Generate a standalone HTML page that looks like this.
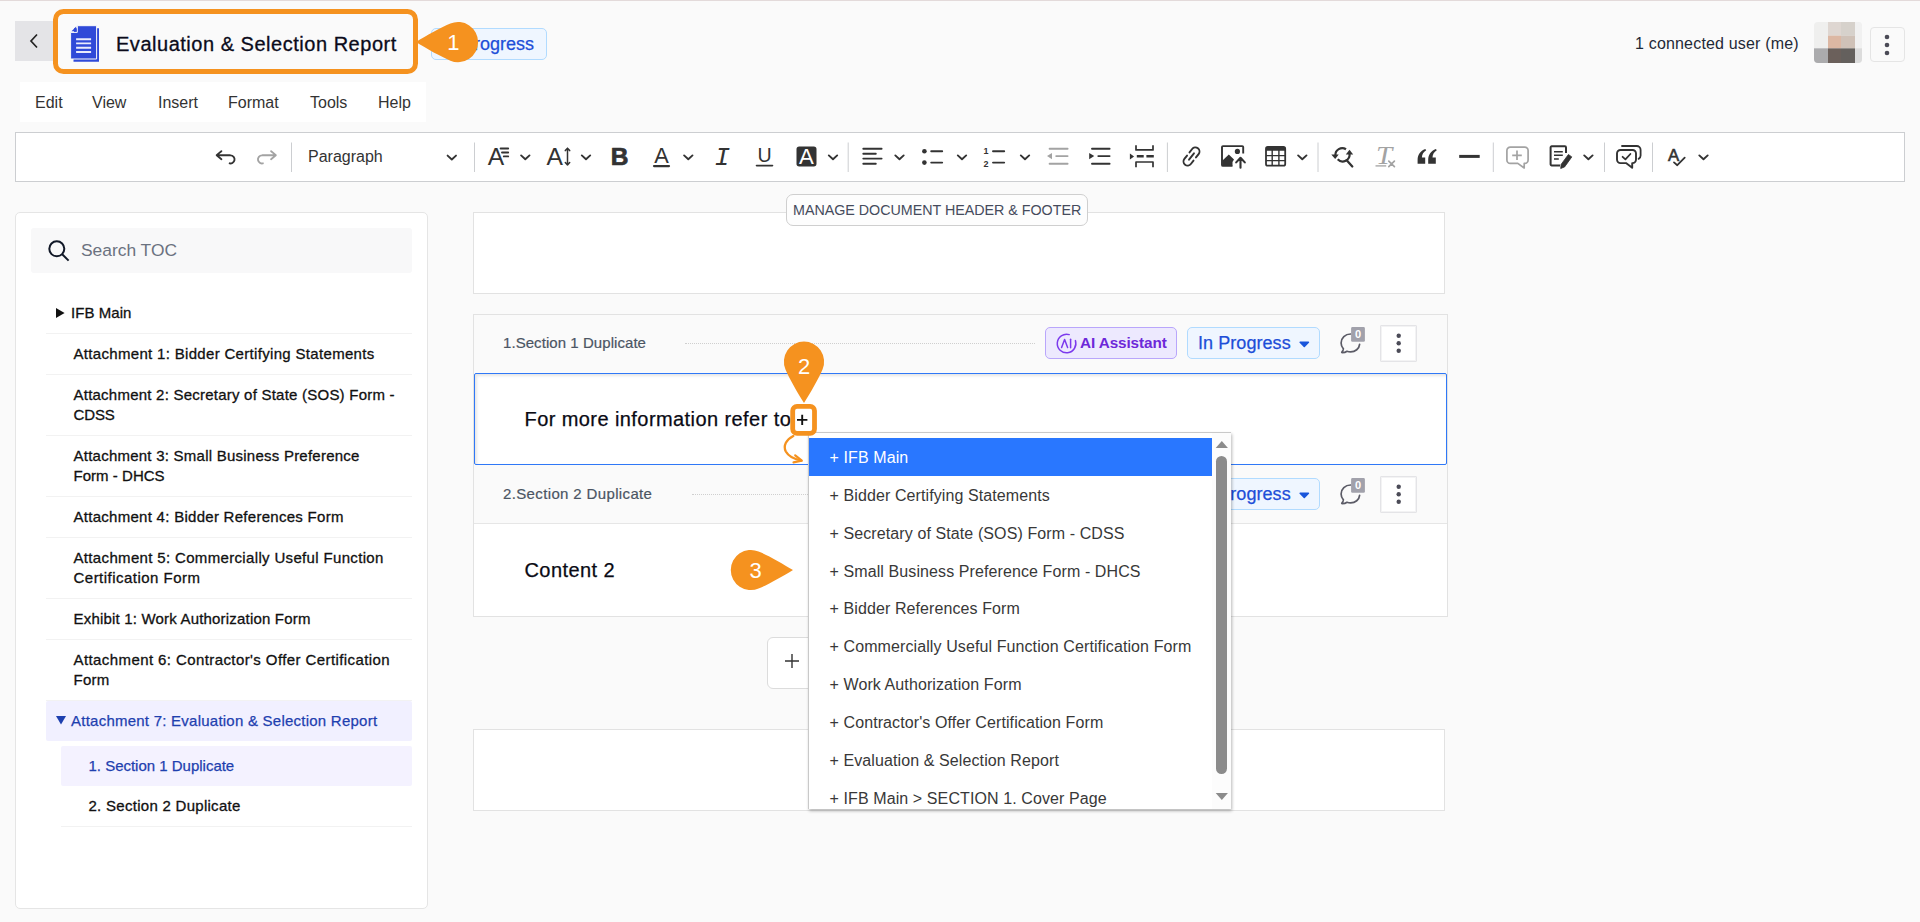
<!DOCTYPE html>
<html lang="en">
<head>
<meta charset="utf-8">
<title>Evaluation &amp; Selection Report</title>
<style>
*{box-sizing:border-box;margin:0;padding:0}
html,body{width:1920px;height:922px;overflow:hidden}
body{background:#fafafa;font-family:"Liberation Sans",Arial,sans-serif;color:#111;position:relative}
.abs{position:absolute}
.topline{left:0;top:0;width:1920px;height:1px;background:#e3dada}
/* header */
.back{left:15px;top:21px;width:40px;height:40px;background:#e4e4e7}
.hl{left:53px;top:9px;width:365px;height:65px;border:5px solid #f5921f;border-radius:10.5px;background:#fafafa}
.title{left:116px;top:31px;font-size:20px;line-height:26px;letter-spacing:.52px;color:#0b0b1a;white-space:nowrap;-webkit-text-stroke:.3px #0b0b1a}
.badge-top{left:431px;top:28px;width:116px;height:32px;border:1px solid #b1dbff;background:#eff6ff;border-radius:5px}
.badge-top span{position:absolute;left:10px;top:4px;font-size:18px;line-height:22px;color:#1d4ed8;white-space:nowrap;-webkit-text-stroke:.25px #1d4ed8}
.conn{left:1635px;top:34px;font-size:16px;line-height:20px;letter-spacing:.18px;color:#1f2937;white-space:nowrap}
.kebab-top{left:1870px;top:27px;width:35px;height:35px;border:1px solid #e5e5e5;border-radius:4px;background:#fafafa}
/* menu */
.menubar{left:20px;top:82px;width:406px;height:40px;background:#fff}
.menubar span{position:absolute;top:11px;font-size:16px;line-height:20px;color:#333;white-space:nowrap}
/* toolbar */
.toolbar{left:15px;top:132px;width:1890px;height:50px;background:#fff;border:1px solid #ccced1}
.tsep{position:absolute;top:142px;width:1px;height:30px;background:#ccced1}
.ico{position:absolute;overflow:visible}
/* toc */
.toc{left:15px;top:212px;width:413px;height:697px;background:#fff;border:1px solid #e5e5e5;border-radius:5px}
.search{left:31px;top:228px;width:381px;height:45px;background:#f8f8f9;border-radius:3px}
.search span{position:absolute;left:50px;top:11px;font-size:17.4px;line-height:22px;color:#6b7280;white-space:nowrap}
.ti{position:absolute;left:46px;width:366px;border-bottom:1px solid #f2f2f2;font-size:15px;line-height:20px;color:#111;letter-spacing:.28px;-webkit-text-stroke:.3px #111}
.ti span{position:absolute;left:27.5px;white-space:nowrap}
/* main */
.box{position:absolute;background:#fff;border:1px solid #e2e2e2}
.sechead{position:absolute;left:474px;width:973px;background:#fafafa}
.secname{position:absolute;left:503px;font-size:15px;line-height:20px;color:#4b5563;white-space:nowrap;-webkit-text-stroke:.2px #4b5563}
.dots{position:absolute;height:0;border-top:1px dotted #cfcfcf}
.ai{position:absolute;left:1045px;width:132px;height:32px;border:1px solid #b9a6fb;background:#ede9fe;border-radius:5px}
.ai span{position:absolute;left:34px;top:5px;font-size:15.3px;line-height:20px;font-weight:bold;color:#6d28d9;white-space:nowrap;letter-spacing:-.1px}
.prog{position:absolute;left:1187px;width:133px;height:32px;border:1px solid #b1dbff;background:#eff6ff;border-radius:5px}
.prog span{position:absolute;left:10px;top:4px;font-size:18px;line-height:22px;color:#1d4ed8;white-space:nowrap;letter-spacing:.06px;-webkit-text-stroke:.25px #1d4ed8}
.keb{position:absolute;left:1380px;width:37px;height:37px;border:1px solid #e4e4e7;background:#fff;border-radius:1px;box-shadow:inset 0 0 0 1px #f3f3f4}
.ptext{position:absolute;left:524.5px;font-size:20px;line-height:26px;color:#0a0a14;white-space:nowrap;letter-spacing:.42px;-webkit-text-stroke:.25px #0a0a14}
/* dropdown */
.dd{left:808px;top:432px;width:423px;height:376.5px;background:#fff;border-top:1px solid #c9c9c9;border-left:1px solid #c9c9c9;box-shadow:1px 2px 3px rgba(0,0,0,.28);overflow:hidden}
.dd .it{position:absolute;left:0;width:403px;height:38px;font-size:16px;line-height:38px;padding-left:20.5px;padding-top:1.3px;color:#383838;white-space:nowrap;letter-spacing:.1px}
.dd .it.sel{background:#2977ff;color:#fff}
</style>
</head>
<body>
<div class="abs topline"></div>

<!-- header -->
<div class="abs back"></div>
<svg class="ico" style="left:27px;top:32px" width="14" height="18" viewBox="0 0 14 18"><path d="M10 2.5 4 9l6 6.5" fill="none" stroke="#222" stroke-width="1.7"/></svg>
<div class="abs badge-top"><span>In Progress</span></div>
<div class="abs hl"></div>
<svg class="ico" style="left:70px;top:25px" width="30" height="38" viewBox="0 0 30 38">
  <path d="M4 3.3h25v33.4H3.5z" fill="#2f49d8"/>
  <path d="M7.3 .7h19.3v33.3H.6V7.4h6.7z" fill="#2f49d8" stroke="#fafafa" stroke-width="1"/>
  <path d="M1.5 6.3 6.2 1.6v4.7z" fill="#2f49d8"/>
  <path d="M6.1 14.2h15M6.1 18.4h15M6.1 22.8h15M6.1 27h15" stroke="#e9ebfc" stroke-width="1.9"/>
</svg>
<div class="abs title">Evaluation &amp; Selection Report</div>
<!-- callout 1 -->
<svg class="ico" style="left:0;top:0" width="1920" height="100" viewBox="0 0 1920 100"><path d="M415.9 42.1C426.2 48.5 441.6 57.2 450.4 60.7A20.1 20.1 0 1 0 450.4 23.5C441.6 27.0 426.2 35.7 415.9 42.1z" fill="#f5921f"/><text x="453.3" y="50" font-size="22" fill="#fff" text-anchor="middle" font-family="Liberation Sans, sans-serif">1</text></svg>
<div class="abs conn">1 connected user (me)</div>
<svg class="ico" style="left:1814px;top:22px" width="48" height="41" viewBox="0 0 48 42" preserveAspectRatio="none">
  <defs><clipPath id="av"><rect x="0" y="0" width="48" height="42" rx="4"/></clipPath></defs>
  <g clip-path="url(#av)">
  <rect width="48" height="42" fill="#efefee"/>
  <rect x="14" y="0" width="13" height="14" fill="#ded6d1"/><rect x="27" y="0" width="14" height="14" fill="#d6d1cb"/>
  <rect x="14" y="14" width="13" height="13" fill="#dcb7a3"/><rect x="27" y="14" width="14" height="13" fill="#cfc1b7"/>
  <rect x="41" y="0" width="7" height="27" fill="#f1f1f1"/>
  <rect x="0" y="27" width="14" height="15" fill="#ababad"/><rect x="14" y="27" width="13" height="15" fill="#6b605b"/><rect x="27" y="27" width="14" height="15" fill="#64605d"/><rect x="41" y="27" width="7" height="15" fill="#dcdcdc"/>
  </g>
</svg>
<div class="abs kebab-top"></div>
<svg class="ico" style="left:1884.3px;top:33.5px" width="6" height="22" viewBox="0 0 6 22"><circle cx="3" cy="3" r="2.3" fill="#4b4b57"/><circle cx="3" cy="11" r="2.3" fill="#4b4b57"/><circle cx="3" cy="19" r="2.3" fill="#4b4b57"/></svg>

<!-- menu bar -->
<div class="abs menubar">
  <span style="left:15px">Edit</span><span style="left:72px">View</span><span style="left:138px">Insert</span><span style="left:208px">Format</span><span style="left:290px">Tools</span><span style="left:358px">Help</span>
</div>

<!-- toolbar -->
<div class="abs toolbar"></div>
<svg class="ico" style="left:0;top:132px" width="1920" height="50" viewBox="0 132 1920 50">
<g transform="translate(213 144.5) scale(1.25)"><path fill="#333" d="m5.042 9.367 2.189 1.837a.75.75 0 0 1-.965 1.149l-3.788-3.18a.747.747 0 0 1-.21-.284.75.75 0 0 1 .17-.945L6.23 4.762a.75.75 0 1 1 .964 1.15L4.863 7.866h8.917A.75.75 0 0 1 14 7.9a4 4 0 1 1-1.477 7.718l.344-1.489a2.5 2.5 0 1 0 1.094-4.73l.008-.032H5.042z"/></g>
<g transform="translate(254.5 144.5) scale(1.25)"><path fill="#a3a3a3" d="m14.958 9.367-2.189 1.837a.75.75 0 0 0 .965 1.149l3.788-3.18a.747.747 0 0 0 .21-.284.75.75 0 0 0-.17-.945L13.77 4.762a.75.75 0 1 0-.964 1.15l2.331 1.955H6.22A.75.75 0 0 0 6 7.9a4 4 0 1 0 1.477 7.718l-.344-1.489A2.5 2.5 0 1 1 6.039 9.4l-.008-.032h8.927z"/></g>
<path d="M291.5 142.5v29.5" stroke="#ccced1" stroke-width="1"/>
<path d="M447.6 155.6 451.8 159.5 456.0 155.6" fill="none" stroke="#333" stroke-width="1.9" stroke-linecap="round" stroke-linejoin="round"/>
<path d="M474.5 142.5v29.5" stroke="#ccced1" stroke-width="1"/>
<text x="496" y="165" font-size="24.6" text-anchor="middle" fill="#333" font-family="Liberation Sans, sans-serif">A</text><path d="M500.6 148.5h7.6M502 152.5h6.2M503.8 156.4h4.4" stroke="#333" stroke-width="1.9" stroke-linecap="round"/>
<path d="M521.1 155.4 525.3 159.3 529.5 155.4" fill="none" stroke="#333" stroke-width="1.9" stroke-linecap="round" stroke-linejoin="round"/>
<text x="554.7" y="165" font-size="24.6" text-anchor="middle" fill="#333" font-family="Liberation Sans, sans-serif">A</text><path d="M567.5 148.3v16.6M565.3 150.6 567.5 148.2 569.7 150.6M565.3 162.6 567.5 165 569.7 162.6" fill="none" stroke="#333" stroke-width="1.5" stroke-linecap="round" stroke-linejoin="round"/>
<path d="M581.8 155.4 586.0 159.3 590.2 155.4" fill="none" stroke="#333" stroke-width="1.9" stroke-linecap="round" stroke-linejoin="round"/>
<text x="619.7" y="165.2" font-size="24.5" font-weight="bold" text-anchor="middle" fill="#333" stroke="#333" stroke-width=".7" stroke-linejoin="round" font-family="Liberation Sans, sans-serif">B</text>
<text x="661.6" y="162.8" font-size="21.8" text-anchor="middle" fill="#333" font-family="Liberation Sans, sans-serif">A</text><path d="M654 166.1h15" stroke="#333" stroke-width="2.2" stroke-linecap="round"/>
<path d="M684.1 155.4 688.3 159.3 692.5 155.4" fill="none" stroke="#333" stroke-width="1.9" stroke-linecap="round" stroke-linejoin="round"/>
<text x="722.4" y="164.9" font-size="26" font-style="italic" text-anchor="middle" fill="#333" font-family="Liberation Mono, monospace">I</text>
<text x="764.5" y="161.6" font-size="19.6" text-anchor="middle" fill="#333" font-family="Liberation Sans, sans-serif">U</text><path d="M756.5 165.6h16" stroke="#333" stroke-width="1.6" stroke-linecap="round"/>
<rect x="796.5" y="146.4" width="20" height="20" rx="2.7" fill="#333"/><text x="806.4" y="164" font-size="22.2" text-anchor="middle" fill="#fff" font-family="Liberation Sans, sans-serif">A</text>
<path d="M828.8 155.4 833.0 159.3 837.2 155.4" fill="none" stroke="#333" stroke-width="1.9" stroke-linecap="round" stroke-linejoin="round"/>
<path d="M848.2 142.5v29.5" stroke="#ccced1" stroke-width="1"/>
<path d="M863.3 148.7h18.3M863.3 153.7h12.5M863.3 158.6h18.3M863.3 163.7h12.5" stroke="#333" stroke-width="1.9" stroke-linecap="round"/>
<path d="M895.3 155.4 899.5 159.3 903.7 155.4" fill="none" stroke="#333" stroke-width="1.9" stroke-linecap="round" stroke-linejoin="round"/>
<circle cx="924.4" cy="151.2" r="2.3" fill="#333"/><circle cx="924.4" cy="162.6" r="2.3" fill="#333"/><path d="M931.2 151.2h11M931.2 162.6h11" stroke="#333" stroke-width="1.9" stroke-linecap="round"/>
<path d="M957.8 155.4 962.0 159.3 966.2 155.4" fill="none" stroke="#333" stroke-width="1.9" stroke-linecap="round" stroke-linejoin="round"/>
<text x="985.9" y="153.9" font-size="9" font-weight="bold" text-anchor="middle" fill="#333" font-family="Liberation Sans, sans-serif">1</text><text x="985.9" y="166.5" font-size="9" font-weight="bold" text-anchor="middle" fill="#333" font-family="Liberation Sans, sans-serif">2</text><path d="M993 151.2h11.2M993 162.6h11.2" stroke="#333" stroke-width="1.9" stroke-linecap="round"/>
<path d="M1020.8 155.4 1025.0 159.3 1029.2 155.4" fill="none" stroke="#333" stroke-width="1.9" stroke-linecap="round" stroke-linejoin="round"/>
<path d="M1049.6 148.7h18M1056.2 156.1h11.4M1049.6 163.7h18" stroke="#a3a3a3" stroke-width="1.9" stroke-linecap="round"/><path d="M1052 152.9v6.4l-5-3.2z" fill="#a3a3a3"/>
<path d="M1092 148.7h17.6M1098.3 156.1h11.3M1092 163.7h17.6" stroke="#333" stroke-width="1.9" stroke-linecap="round"/><path d="M1089.2 152.9v6.4l5-3.2z" fill="#333"/>
<path d="M1136 145.2v4.7h17v-4.7M1136 167.2v-5.2h17v5.2" fill="none" stroke="#333" stroke-width="1.7" stroke-linejoin="round"/><path d="M1136.8 156.3h6.9M1146.4 156.3h7.4" stroke="#333" stroke-width="2.4"/><path d="M1129.9 153.6v6l4.2-3z" fill="#333"/>
<path d="M1167.4 142.5v29.5" stroke="#ccced1" stroke-width="1"/>
<g fill="none" stroke="#333" stroke-width="1.9" stroke-linecap="round" transform="rotate(-52 1191.5 156.5)"><path d="M1189.5 152.4h-4.3a4.1 4.1 0 0 0 0 8.2h4.3"/><path d="M1193.5 152.4h4.3a4.1 4.1 0 0 1 0 8.2h-4.3"/><path d="M1187.5 156.5h8"/></g>
<path d="M1243.2 153.5v-6.4a1 1 0 0 0-1-1h-19.2a1 1 0 0 0-1 1v17.8a1 1 0 0 0 1 1h9.5" fill="none" stroke="#333" stroke-width="1.9"/><path d="M1222.5 165.4v-5l6.3-5.8 5.2 5 -1.5 2.5v3.3z" fill="#333"/><circle cx="1237.4" cy="151.4" r="2.6" fill="#333"/><path d="M1240.5 167.7v-9.5M1236.2 162.4l4.3-4.6 4.3 4.6" fill="none" stroke="#333" stroke-width="2.1" stroke-linecap="round" stroke-linejoin="round"/>
<rect x="1266" y="147" width="19.2" height="18.7" rx="1.8" fill="none" stroke="#333" stroke-width="1.8"/><path d="M1266 150.8v-2a1.8 1.8 0 0 1 1.8-1.8h15.6a1.8 1.8 0 0 1 1.8 1.8v2z" fill="#333"/><path d="M1266 155.6h19.2M1266 160.6h19.2M1272.2 150v15.7M1278.9 150v15.7" stroke="#333" stroke-width="1.4"/>
<path d="M1298.1 155.4 1302.3 159.3 1306.5 155.4" fill="none" stroke="#333" stroke-width="1.9" stroke-linecap="round" stroke-linejoin="round"/>
<path d="M1318 142.5v29.5" stroke="#ccced1" stroke-width="1"/>
<path d="M1335.4 155.5a6.9 6.9 0 0 1 10.6-6.3" fill="none" stroke="#333" stroke-width="2.2"/><path d="M1349.5 153.5a6.9 6.9 0 0 1-11.8 5.8" fill="none" stroke="#333" stroke-width="2.2"/><path d="M1331.3 154.4h7.4l-3.5 4.6z" fill="#333"/><path d="M1345.8 154.6h7.4l-3.7-4.9z" fill="#333"/><path d="M1346.7 160.2l5.6 6.3" stroke="#333" stroke-width="2.3" stroke-linecap="round"/>
<text transform="translate(1376 164.3) scale(1.16 1)" x="0" y="0" font-size="25" font-style="italic" fill="#a3a3a3" font-family="Liberation Serif, serif">T</text><path d="M1375.5 165.9h10.7" stroke="#a3a3a3" stroke-width="1.3"/><path d="M1388.8 161.2l5.6 5.4M1394.4 161.2l-5.6 5.4" stroke="#a3a3a3" stroke-width="1.7" stroke-linecap="round"/>
<path d="M1417.6 163.750h7.6v-6.150h-3.3c.2-3.3 1.5-5.6 4.3-7.3l-.9-1.2c-5 2-7.7 5.8-7.7 10.7z" fill="#333"/><path d="M1428.2 163.750h7.6v-6.150h-3.3c.2-3.3 1.5-5.6 4.3-7.3l-.9-1.2c-5 2-7.7 5.8-7.7 10.7z" fill="#333"/>
<path d="M1459.2 156.4h20.5" stroke="#333" stroke-width="3"/>
<path d="M1493.3 142.5v29.5" stroke="#ccced1" stroke-width="1"/>
<path d="M1510.3 147.2h14.4a3.4 3.4 0 0 1 3.4 3.4v9.4a3.4 3.4 0 0 1-3.4 3.4h-.5v4.6l-6.4-4.6h-7.5a3.4 3.4 0 0 1-3.4-3.4v-9.4a3.4 3.4 0 0 1 3.4-3.4z" fill="none" stroke="#a3a3a3" stroke-width="1.7" stroke-linejoin="round"/><path d="M1517 150.5v9.6M1512.2 155.3h9.6" stroke="#a3a3a3" stroke-width="1.7"/>
<path d="M1566 153v-5.6a1.1 1.1 0 0 0-1.1-1.1h-13.2a1.1 1.1 0 0 0-1.1 1.1v16.9a1.1 1.1 0 0 0 1.1 1.1h8.3" fill="none" stroke="#333" stroke-width="2"/><path d="M1554 151.7h8.8M1554 155.3h8.8M1554 159h4.8" stroke="#333" stroke-width="1.5"/><path d="M1568.4 154.5l3.4 2.4-7.2 10-3.9 1.6.4-4.1z" fill="#333" stroke="#333" stroke-width=".8" stroke-linejoin="round"/>
<path d="M1584.2 155.4 1588.4 159.3 1592.6 155.4" fill="none" stroke="#333" stroke-width="1.9" stroke-linecap="round" stroke-linejoin="round"/>
<path d="M1604.5 142.5v29.5" stroke="#ccced1" stroke-width="1"/>
<path d="M1622 146h14.7a3.9 3.9 0 0 1 3.9 3.9v5.6a3.9 3.9 0 0 1-2 3.4" fill="none" stroke="#333" stroke-width="1.8" stroke-linecap="round"/><path d="M1620.5 150h12a3.5 3.5 0 0 1 3.5 3.5v6.1a3.5 3.5 0 0 1-3.5 3.5h-.3v4.7l-6.2-4.7h-5.5a3.5 3.5 0 0 1-3.5-3.5v-6.1a3.5 3.5 0 0 1 3.5-3.5z" fill="#fff" stroke="#333" stroke-width="1.9" stroke-linejoin="round"/><path d="M1622.6 156.8l2.8 2.5 5-5.3" fill="none" stroke="#333" stroke-width="1.8" stroke-linecap="round" stroke-linejoin="round"/>
<path d="M1652.5 142.5v29.5" stroke="#ccced1" stroke-width="1"/>
<text x="1673.5" y="160.7" font-size="16.8" text-anchor="middle" fill="#333" stroke="#333" stroke-width=".6" font-family="Liberation Sans, sans-serif">A</text><path d="M1674 162.4l3.3 2.8 7.4-7.5" fill="none" stroke="#333" stroke-width="1.8" stroke-linecap="round" stroke-linejoin="round"/>
<path d="M1699.3 155.4 1703.5 159.3 1707.7 155.4" fill="none" stroke="#333" stroke-width="1.9" stroke-linecap="round" stroke-linejoin="round"/>
</svg>
<div class="abs" style="left:308px;top:147px;font-size:16px;line-height:20px;color:#333;white-space:nowrap">Paragraph</div>

<!-- toc -->
<div class="abs toc"></div>
<div class="abs search">
  <svg class="ico" style="left:17px;top:12px" width="22" height="22" viewBox="0 0 22 22"><circle cx="8.8" cy="8.8" r="7.5" fill="none" stroke="#111827" stroke-width="2"/><path d="M14.2 14.2 20.6 20.6" stroke="#111827" stroke-width="2"/></svg>
  <span>Search TOC</span>
</div>
<div class="ti" style="top:293px;height:41px"><svg class="ico" style="left:10px;top:15px" width="9" height="10" viewBox="0 0 9 10"><path d="M0 0 8.6 5 0 10z" fill="#111"/></svg><span style="left:25px;top:10px;letter-spacing:.05px">IFB Main</span></div>
<div class="ti" style="top:334px;height:41px"><span style="top:10px"><i style="font-style:normal;letter-spacing:0.32px">Attachment 1: Bidder Certifying Statements</i></span></div>
<div class="ti" style="top:375px;height:61px"><span style="top:10px"><i style="font-style:normal;letter-spacing:0.23px">Attachment 2: Secretary of State (SOS) Form -</i><br><i style="font-style:normal;letter-spacing:-0.11px">CDSS</i></span></div>
<div class="ti" style="top:436px;height:61px"><span style="top:10px"><i style="font-style:normal;letter-spacing:0.24px">Attachment 3: Small Business Preference</i><br><i style="font-style:normal;letter-spacing:0.03px">Form - DHCS</i></span></div>
<div class="ti" style="top:497px;height:41px"><span style="top:10px">Attachment 4: Bidder References Form</span></div>
<div class="ti" style="top:538px;height:61px"><span style="top:10px"><i style="font-style:normal;letter-spacing:0.34px">Attachment 5: Commercially Useful Function</i><br><i style="font-style:normal;letter-spacing:0.48px">Certification Form</i></span></div>
<div class="ti" style="top:599px;height:41px"><span style="top:10px"><i style="font-style:normal;letter-spacing:0.19px">Exhibit 1: Work Authorization Form</i></span></div>
<div class="ti" style="top:640px;height:61px"><span style="top:10px"><i style="font-style:normal;letter-spacing:0.41px">Attachment 6: Contractor's Offer Certification</i><br>Form</span></div>
<div class="ti" style="top:701px;height:40px;background:#f1f0ff;border-bottom:none;border-radius:2px;color:#1e40af;-webkit-text-stroke:.25px #1e40af"><svg class="ico" style="left:10px;top:15px" width="10" height="9" viewBox="0 0 10 9"><path d="M0 0h10L5 8.6z" fill="#1e40af"/></svg><span style="left:25px;top:10px"><i style="font-style:normal;letter-spacing:0.24px">Attachment 7: Evaluation &amp; Selection Report</i></span></div>
<div class="ti" style="left:61px;width:351px;top:746px;height:40px;background:#f4f2ff;border-bottom:none;border-radius:2px;color:#1e40af;-webkit-text-stroke:.25px #1e40af"><span style="top:10px"><i style="font-style:normal;letter-spacing:-0.01px">1. Section 1 Duplicate</i></span></div>
<div class="ti" style="left:61px;width:351px;top:786px;height:41px"><span style="top:10px">2. Section 2 Duplicate</span></div>


<!-- main -->
<div class="box" style="left:473px;top:212px;width:972px;height:82px"></div>
<div class="abs" style="left:786px;top:194px;width:302px;height:32px;border:1px solid #cfcfcf;border-radius:7px;background:#fdfdfd"><span style="position:absolute;left:6px;top:5px;font-size:14.3px;line-height:20px;color:#454b5c;white-space:nowrap;letter-spacing:-.02px">MANAGE DOCUMENT HEADER &amp; FOOTER</span></div>

<div class="box" style="left:473px;top:314px;width:975px;height:303px"></div>
<div class="sechead" style="top:315px;height:58px"></div>
<div class="secname" style="top:333px;letter-spacing:.06px">1.Section 1 Duplicate</div>
<div class="dots" style="left:685px;top:343px;width:350px"></div>
<div class="ai" style="top:327px"><svg class="ico" style="left:9.5px;top:4.6px" width="21" height="21" viewBox="0 0 21 21"><path d="M13.2 1.6A9.3 9.3 0 1 0 19.4 7.6" fill="none" stroke="#7c3aed" stroke-width="1.5" stroke-linecap="round"/><path d="M5.6 14.6 8.6 6.4l3 8.2" fill="none" stroke="#7c3aed" stroke-width="1.5" stroke-linejoin="round" stroke-linecap="round"/><path d="M14.6 6.2v8.6" stroke="#7c3aed" stroke-width="1.5" stroke-linecap="round"/></svg><span>AI Assistant</span></div>
<div class="prog" style="top:327px"><span>In Progress</span><svg class="ico" style="left:110.7px;top:13.2px" width="11" height="7" viewBox="0 0 11 7"><path d="M1.2 1.2h8.2L5.3 5.4z" fill="#1a56db" stroke="#1a56db" stroke-width="1.6" stroke-linejoin="round"/></svg></div>
<svg class="ico" style="left:1339px;top:327px" width="27" height="28" viewBox="0 0 27 28"><path d="M11.6 7C6.2 7 2.1 11 2.1 16c0 2.3.9 4.3 2.3 5.8-.1 1.3-.6 2.4-1.5 3.2-.3.3-.1.7.3.7 1.9 0 3.6-.5 4.8-1.4 1.1.4 2.3.6 3.6.6 4.7 0 8.6-3.2 9-7.6" fill="none" stroke="#5b5b66" stroke-width="1.7" stroke-linecap="round" stroke-linejoin="round"/><rect x="12.1" y=".1" width="13.8" height="14.6" rx="1.3" fill="#a1a1ab"/><text x="19" y="11" font-size="11" font-weight="bold" fill="#fff" text-anchor="middle" font-family="Liberation Sans, sans-serif">0</text></svg>
<div class="keb" style="top:325px"><svg class="ico" style="left:14.5px;top:6.5px" width="6" height="21" viewBox="0 0 6 21"><circle cx="2.7" cy="2.7" r="2.2" fill="#4b4b57"/><circle cx="2.7" cy="10.3" r="2.2" fill="#4b4b57"/><circle cx="2.7" cy="17.8" r="2.2" fill="#4b4b57"/></svg></div>
<div class="abs" style="left:474px;top:373px;width:973px;height:92px;border:1px solid #2f78f7;background:#fff;border-radius:2px;box-shadow:inset 2px 2px 3px rgba(0,0,0,.1)"></div>
<div class="ptext" style="top:406px">For more information refer to</div>
<div class="sechead" style="top:465px;height:59px;border-bottom:1px solid #e6e6e6"></div>
<div class="secname" style="top:484px;letter-spacing:.36px">2.Section 2 Duplicate</div>
<div class="dots" style="left:692px;top:494px;width:350px"></div>
<div class="ai" style="top:478px"><svg class="ico" style="left:9.5px;top:4.6px" width="21" height="21" viewBox="0 0 21 21"><path d="M13.2 1.6A9.3 9.3 0 1 0 19.4 7.6" fill="none" stroke="#7c3aed" stroke-width="1.5" stroke-linecap="round"/><path d="M5.6 14.6 8.6 6.4l3 8.2" fill="none" stroke="#7c3aed" stroke-width="1.5" stroke-linejoin="round" stroke-linecap="round"/><path d="M14.6 6.2v8.6" stroke="#7c3aed" stroke-width="1.5" stroke-linecap="round"/></svg><span>AI Assistant</span></div>
<div class="prog" style="top:478px"><span>In Progress</span><svg class="ico" style="left:110.7px;top:13.2px" width="11" height="7" viewBox="0 0 11 7"><path d="M1.2 1.2h8.2L5.3 5.4z" fill="#1a56db" stroke="#1a56db" stroke-width="1.6" stroke-linejoin="round"/></svg></div>
<svg class="ico" style="left:1339px;top:478px" width="27" height="28" viewBox="0 0 27 28"><path d="M11.6 7C6.2 7 2.1 11 2.1 16c0 2.3.9 4.3 2.3 5.8-.1 1.3-.6 2.4-1.5 3.2-.3.3-.1.7.3.7 1.9 0 3.6-.5 4.8-1.4 1.1.4 2.3.6 3.6.6 4.7 0 8.6-3.2 9-7.6" fill="none" stroke="#5b5b66" stroke-width="1.7" stroke-linecap="round" stroke-linejoin="round"/><rect x="12.1" y=".1" width="13.8" height="14.6" rx="1.3" fill="#a1a1ab"/><text x="19" y="11" font-size="11" font-weight="bold" fill="#fff" text-anchor="middle" font-family="Liberation Sans, sans-serif">0</text></svg>
<div class="keb" style="top:476px"><svg class="ico" style="left:14.5px;top:6.5px" width="6" height="21" viewBox="0 0 6 21"><circle cx="2.7" cy="2.7" r="2.2" fill="#4b4b57"/><circle cx="2.7" cy="10.3" r="2.2" fill="#4b4b57"/><circle cx="2.7" cy="17.8" r="2.2" fill="#4b4b57"/></svg></div>
<div class="ptext" style="top:557px">Content 2</div>

<div class="abs" style="left:767px;top:637px;width:60px;height:52px;border:1px solid #dcdcdc;border-radius:6px;background:#fff"></div>
<svg class="ico" style="left:784px;top:653px" width="16" height="16" viewBox="0 0 16 16"><path d="M8 1v14M1 8h14" stroke="#333" stroke-width="1.4"/></svg>
<div class="box" style="left:473px;top:729px;width:972px;height:82px"></div>

<!-- dropdown -->
<div class="abs dd">
<div class="it sel" style="top:5px">+ IFB Main</div>
<div class="it" style="top:43px">+ Bidder Certifying Statements</div>
<div class="it" style="top:81px">+ Secretary of State (SOS) Form - CDSS</div>
<div class="it" style="top:119px">+ Small Business Preference Form - DHCS</div>
<div class="it" style="top:156px">+ Bidder References Form</div>
<div class="it" style="top:194px">+ Commercially Useful Function Certification Form</div>
<div class="it" style="top:232px">+ Work Authorization Form</div>
<div class="it" style="top:270px">+ Contractor's Offer Certification Form</div>
<div class="it" style="top:308px">+ Evaluation &amp; Selection Report</div>
<div class="it" style="top:346px">+ IFB Main &gt; SECTION 1. Cover Page</div>

<div style="position:absolute;left:403px;top:0;width:20px;height:376px;background:#fcfcfc"></div>
<svg class="ico" style="left:405.6px;top:8px" width="13.6" height="7" viewBox="0 0 14 8"><path d="M0 8 7 0l7 8z" fill="#8b8b8b"/></svg>
<div style="position:absolute;left:407px;top:23px;width:11px;height:318px;border-radius:6px;background:#8b8b8b"></div>
<svg class="ico" style="left:405.6px;top:360px" width="13.6" height="7" viewBox="0 0 14 8"><path d="M0 0h14L7 8z" fill="#8b8b8b"/></svg>
</div>


<!-- callouts 2 and 3 -->
<svg class="ico" style="left:0;top:0" width="1920" height="922" viewBox="0 0 1920 922">
<path d="M804.0 403.1C810.4 392.8 819.1 378.1 822.6 369.3A20.1 20.1 0 1 0 785.4 369.3C788.9 378.1 797.6 392.8 804.0 403.1z" fill="#f5921f"/><text x="804" y="374.3" font-size="22" fill="#fff" text-anchor="middle" font-family="Liberation Sans, sans-serif">2</text>
<rect x="792.7" y="406.4" width="21.8" height="27" rx="4.3" fill="#fff" stroke="#f5921f" stroke-width="4.8"/>
<path d="M802.2 414.7v10.4M797 419.9h10.4" stroke="#111" stroke-width="1.9"/>
<path d="M793.3 436C786.5 439.5 782.8 445.5 785.8 451.5 788.3 456 794 459 801 460.5" fill="none" stroke="#f5921f" stroke-width="2.3" stroke-linecap="round"/>
<path d="M795.2 455.3 801.8 460.7 793.5 462.3" fill="none" stroke="#f5921f" stroke-width="2.2" stroke-linecap="round" stroke-linejoin="round"/>
<path d="M793.0 570.0C782.7 563.6 767.3 554.9 758.5 551.4A20.1 20.1 0 1 0 758.5 588.6C767.3 585.1 782.7 576.4 793.0 570.0z" fill="#f5921f"/><text x="755.6" y="578.1" font-size="22" fill="#fff" text-anchor="middle" font-family="Liberation Sans, sans-serif">3</text>
</svg>

</body>
</html>
